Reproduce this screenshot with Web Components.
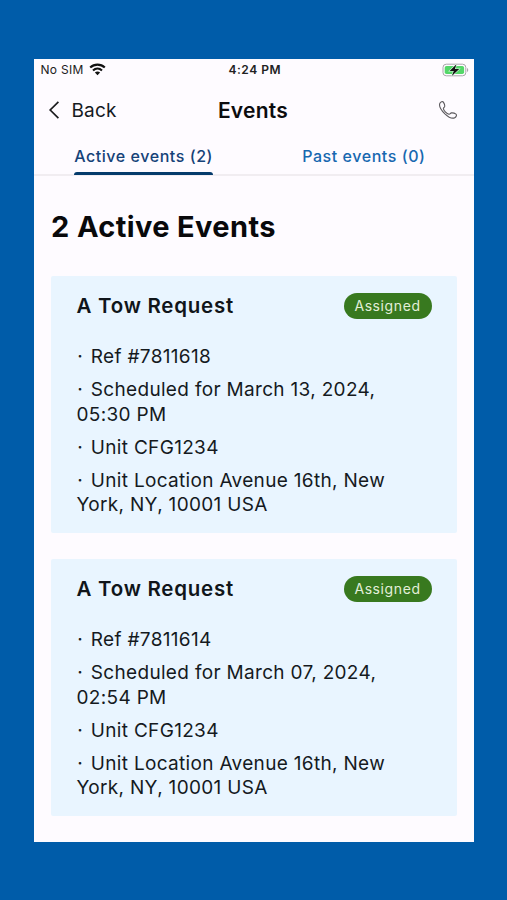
<!DOCTYPE html>
<html lang="en">
<head>
<meta charset="utf-8">
<title>Events</title>
<style>
	body {
		margin: 0;
		height: 900px;
		overflow: hidden;
		background: #005ca9;
		font-family: Inter, "Liberation Sans", sans-serif;
		color: #151a1e;
	}
</style>
</head>
<body>
<phone-screen>
	<status-bar slot="top"></status-bar>
	<nav-bar slot="top" back="Back">Events</nav-bar>
	<tab-bar slot="top">
		<tab-item selected>Active events (2)</tab-item>
		<tab-item>Past events (0)</tab-item>
	</tab-bar>
	<event-list heading="2 Active Events"></event-list>
</phone-screen>

<script>
const html = String.raw;

const EVENTS = [
	{
		title: "A Tow Request",
		status: "Assigned",
		details: [
			"Ref #7811618",
			"Scheduled for March 13, 2024, 05:30 PM",
			"Unit CFG1234",
			"Unit Location Avenue 16th, New York, NY, 10001 USA",
		],
	},
	{
		title: "A Tow Request",
		status: "Assigned",
		details: [
			"Ref #7811614",
			"Scheduled for March 07, 2024, 02:54 PM",
			"Unit CFG1234",
			"Unit Location Avenue 16th, New York, NY, 10001 USA",
		],
	},
];

class BaseElement extends HTMLElement {
	constructor() {
		super();
		this.attachShadow({ mode: "open" });
		const template = document.createElement("template");
		template.innerHTML = this.constructor.markup;
		this.shadowRoot.appendChild(template.content.cloneNode(true));
	}
}

class PhoneScreen extends BaseElement {
	static markup = html`
		<style>
			:host {
				display: block;
				padding: 58.5px 33px 58px 33.5px;
			}

			.screen {
				height: 783.5px;
				background: #fefbff;
				overflow: hidden;
			}
		</style>
		<div class="screen">
			<slot name="top"></slot>
			<slot></slot>
		</div>
	`;
}

class StatusBar extends BaseElement {
	static markup = html`
		<style>
			:host {
				display: grid;
				grid-template-columns: 1fr auto 1fr;
				align-items: center;
				height: 22.5px;
				padding: 0 5px 0 7px;
				font-size: 12px;
				color: #222;
			}

			.carrier {
				display: flex;
				align-items: center;
				gap: 5px;
				letter-spacing: 0.3px;
			}

			.time {
				font-weight: 600;
				font-size: 12px;
				letter-spacing: 0.5px;
			}

			.battery {
				justify-self: end;
			}

			svg {
				display: block;
			}
		</style>
		<div class="carrier">
			<span>No SIM</span>
			<svg width="17" height="13" viewBox="0 0 17 13" fill="none" stroke="#111" stroke-width="2.1">
				<path d="M1.2 4.6C5.3 .6 11.7 .6 15.8 4.6" />
				<path d="M4 7.5C6.6 5 10.4 5 13 7.5" />
				<path d="M8.5 12.2L5.9 9.6C7.3 8.2 9.7 8.2 11.1 9.6Z" fill="#111" stroke="none" />
			</svg>
		</div>
		<span class="time">4:24 PM</span>
		<svg class="battery" width="27" height="14" viewBox="0 0 27 14">
			<rect x="1" y="1.2" width="22.8" height="11.6" rx="3.2" fill="#fefbff" stroke="#aaa6ab" />
			<rect x="2.7" y="2.9" width="19.4" height="8.2" rx="1.8" fill="#54d769" />
			<path d="M25 5v4c1.7-.6 1.7-3.4 0-4Z" fill="#aaa6ab" />
			<path d="M14.5 1.3L7.6 7.9h4.2L9.8 12.9L17.2 6h-4.3Z" fill="#111" stroke="#d5f3dc" stroke-width="1.2" paint-order="stroke" />
		</svg>
	`;
}

class NavBar extends BaseElement {
	static markup = html`
		<style>
			:host {
				display: grid;
				grid-template-columns: 1fr auto 1fr;
				align-items: center;
				height: 57px;
				padding: 0 16px 0 14.5px;
			}

			.back {
				display: flex;
				align-items: center;
				gap: 10.5px;
				font-size: 19px;
				letter-spacing: 0.15px;
			}

			.back span,
			.title {
				padding-top: 2px;
			}

			.title {
				font-size: 21px;
				font-weight: 600;
				letter-spacing: 0.25px;
				color: #0c0c0e;
			}

			.call {
				justify-self: end;
			}

			svg {
				display: block;
			}
		</style>
		<div class="back">
			<svg width="13" height="20" viewBox="0 0 13 20" fill="none" stroke="#1b1b1d" stroke-width="1.7">
				<path d="M10.4 1.8L2.2 10L10.4 18.2" />
			</svg>
			<span id="back"></span>
		</div>
		<span class="title"><slot></slot></span>
		<svg class="call" width="20" height="20" viewBox="0 0 20 20" fill="none" stroke="#5b595d" stroke-width="1.1" stroke-linejoin="round">
			<path d="M1.9 3.2C2.6 1.7 4.6 1.1 5.4 2.1C6.2 3.4 6.9 5.5 6.7 6.5C6.5 7.5 5.1 7.7 5.4 8.9C6 11 8.7 13.7 10.9 14.2C12.1 14.5 12.3 13.1 13.4 12.9C14.6 12.8 17 13.4 18 14.1C19 15 18.2 17 16.8 17.7C14.6 18.8 10.5 17.2 6.9 13.8C3.3 10.2 .8 5.6 1.9 3.2Z" />
		</svg>
	`;

	connectedCallback() {
		this.shadowRoot.getElementById("back").textContent = this.getAttribute("back");
	}
}

class TabBar extends BaseElement {
	static markup = html`
		<style>
			:host {
				display: grid;
				grid-template-columns: 1fr 1fr;
				justify-items: center;
				height: 36px;
				border-bottom: 2px solid #f1edf1;
			}
		</style>
		<slot></slot>
	`;
}

class TabItem extends BaseElement {
	static markup = html`
		<style>
			:host {
				display: block;
				height: 37.5px;
				box-sizing: border-box;
				padding-top: 6px;
				font-size: 16px;
				font-weight: 500;
				line-height: 24px;
				letter-spacing: 0.56px;
				white-space: nowrap;
				color: #1768b0;
			}

			:host([selected]) {
				color: #154278;
			}

			:host([selected])::after {
				content: "";
				display: block;
				height: 3px;
				margin-top: 4px;
				background: #053b6b;
				border-radius: 3px 3px 0 0;
			}
		</style>
		<slot></slot>
	`;
}

class StatusBadge extends BaseElement {
	static markup = html`
		<style>
			:host {
				display: flex;
				align-items: center;
				justify-content: center;
				width: 88px;
				height: 26px;
				border-radius: 13px;
				background: #38791f;
				color: #e3efd9;
				font-size: 14px;
				font-weight: 400;
				letter-spacing: 0.6px;
			}
		</style>
		<slot></slot>
	`;
}

class EventCard extends BaseElement {
	static markup = html`
		<style>
			:host {
				display: block;
				box-sizing: border-box;
				height: 257px;
				padding: 16.5px 25px 0 25.5px;
				background: #e9f5ff;
				border-radius: 2px;
			}

			header {
				display: flex;
				align-items: center;
				justify-content: space-between;
				height: 26px;
				font-size: 20.5px;
				font-weight: 600;
				letter-spacing: 0.74px;
				color: #10151a;
			}

			ul {
				display: grid;
				gap: 8.5px;
				margin: 26.5px 0 0;
				padding: 0;
				list-style: none;
				font-size: 19px;
				line-height: 24.5px;
				letter-spacing: 0.32px;
			}

			li {
				width: 320px;
				text-indent: 0.8px;
			}
		</style>
		<header>
			<slot name="title"></slot>
			<slot name="status"></slot>
		</header>
		<ul></ul>
	`;

	set details(lines) {
		this.shadowRoot.querySelector("ul").replaceChildren(
			...lines.map((line) => {
				const li = document.createElement("li");
				li.textContent = `·\u200a ${line}`;
				return li;
			}),
		);
	}
}

class EventList extends BaseElement {
	static markup = html`
		<style>
			:host {
				display: block;
				padding: 31px 17.5px 0 17.5px;
			}

			h1 {
				margin: 0 0 29px;
				font-size: 29px;
				font-weight: 700;
				line-height: 40px;
				letter-spacing: 0.38px;
				color: #09090b;
			}

			.cards {
				display: grid;
				gap: 26px;
			}
		</style>
		<h1></h1>
		<div class="cards"></div>
	`;

	connectedCallback() {
		this.shadowRoot.querySelector("h1").textContent = this.getAttribute("heading");
		this.shadowRoot.querySelector(".cards").replaceChildren(...EVENTS.map(this.#card));
	}

	#card({ title, status, details }) {
		const card = document.createElement("event-card");
		const name = document.createElement("span");
		name.slot = "title";
		name.textContent = title;
		const badge = document.createElement("status-badge");
		badge.slot = "status";
		badge.textContent = status;
		card.append(name, badge);
		card.details = details;
		return card;
	}
}

customElements.define("phone-screen", PhoneScreen);
customElements.define("status-bar", StatusBar);
customElements.define("nav-bar", NavBar);
customElements.define("tab-bar", TabBar);
customElements.define("tab-item", TabItem);
customElements.define("status-badge", StatusBadge);
customElements.define("event-card", EventCard);
customElements.define("event-list", EventList);
</script>
</body>
</html>
